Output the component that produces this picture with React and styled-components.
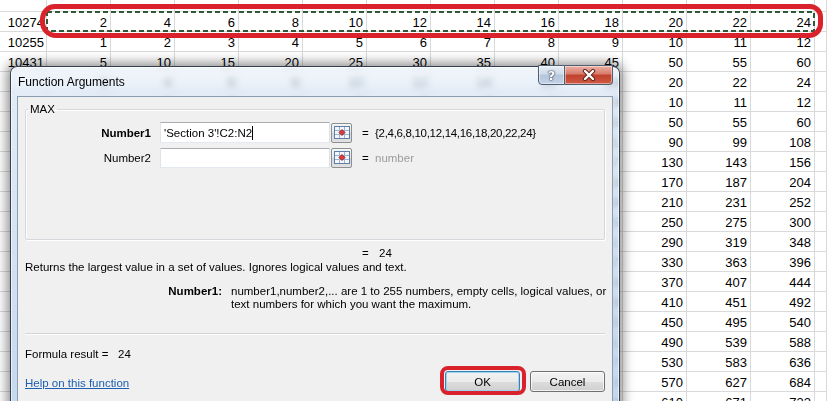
import React from 'react'
import styled, { createGlobalStyle } from 'styled-components'

const GlobalStyle = createGlobalStyle`
  html, body { margin: 0; padding: 0; background: #fff; overflow: hidden; }
`

// multiplier for each sheet row, value in column c is k * c
const rowFactors = [2, 1, 5, 2, 1, 5, 9, 13, 17, 21, 25, 29, 33, 37, 41, 45, 49, 53, 57, 61]
const rowLabels = ['10274', '10255', '10431']

const Page = styled.div`
  position: relative;
  width: 827px;
  height: 401px;
  overflow: hidden;
  font-family: "Liberation Sans", Arial, sans-serif;
`

const Sheet = styled.div`
  display: grid;
  grid-template-columns: 47px repeat(12, 64px) 1fr;
  grid-auto-rows: 20px;
  margin-top: -8px;
  font-size: 13px;
  color: #000;
`

const Cell = styled.div`
  box-sizing: border-box;
  border-right: 1px solid #d9d9d9;
  border-bottom: 1px solid #d9d9d9;
  text-align: right;
  padding: 1px ${p => (p.$label ? 2 : 3)}px 0 0;
  line-height: 19px;
  white-space: nowrap;
`

const Marquee = styled.svg`
  position: absolute;
  left: 46px;
  top: 11px;
`

const RedMark = styled.div`
  position: absolute;
  left: 40px;
  top: 4px;
  width: 783px;
  height: 34px;
  box-sizing: border-box;
  border: 5px solid #d9222b;
  border-radius: 15px 13px 14px 16px;
`

const Dialog = styled.div`
  position: absolute;
  left: 10px;
  top: 66px;
  width: 610px;
  height: 360px;
  box-sizing: border-box;
  border: 1px solid rgba(25, 35, 50, 0.85);
  border-radius: 7px 7px 0 0;
  padding: 0 6px;
  background: linear-gradient(to bottom, rgba(236, 243, 250, 0.66) 0, rgba(214, 228, 244, 0.72) 30px, rgba(186, 208, 234, 0.85) 100%);
  backdrop-filter: blur(3px);
  box-shadow: 0 0 12px 3px rgba(0, 0, 0, 0.45), inset 0 0 0 1px rgba(255, 255, 255, 0.6);
`

const TitleBar = styled.div`
  display: flex;
  align-items: flex-start;
  height: 29px;
`

const Title = styled.div`
  flex: 1;
  font-size: 12px;
  line-height: 14px;
  padding: 8px 0 0 1px;
  color: #000;
`

const CaptionButton = styled.div`
  width: ${p => p.$w}px;
  height: 20px;
  margin-top: -2px;
  box-sizing: border-box;
  display: flex;
  align-items: center;
  justify-content: center;
  border: 1px solid #4e5d70;
  border-left-width: ${p => (p.$close ? 0 : 1)}px;
  border-radius: ${p => (p.$close ? '0 0 4px 0' : '0 0 0 4px')};
  background: ${p => p.$close
    ? 'linear-gradient(#eab1a6 0, #d87a69 45%, #c1412d 50%, #cf5a43 100%)'
    : 'linear-gradient(#e6edf6 0, #cfdbe9 45%, #b4c6dc 50%, #c3d3e6 100%)'};
  box-shadow: inset 0 0 0 1px rgba(255, 255, 255, 0.45);
`

const HelpGlyph = styled.span`
  font-family: "DejaVu Sans", sans-serif;
  font-weight: bold;
  font-size: 13px;
  color: #fff;
  text-shadow: 0 0 1px #3a4656, 0 0 1px #3a4656, 0 0 2px #3a4656;
`

const Client = styled.div`
  box-sizing: border-box;
  height: 331px;
  border: 1px solid #8a9cb2;
  background: #f0f0f0;
  padding: 5px 7px 0 7px;
  font-size: 11.5px;
  color: #000;
`

const Group = styled.fieldset`
  margin: 0;
  box-sizing: border-box;
  height: 138px;
  padding: 6px 0 0 0;
  border: 1px solid #d5d9de;
  box-shadow: 1px 1px 0 #fff, inset 1px 1px 0 #fff;
  border-radius: 2px;
  display: flex;
  flex-direction: column;
  gap: 4px;
`

const Legend = styled.legend`
  margin-left: 2px;
  padding: 0 2px;
  line-height: 14px;
`

const ArgRow = styled.div`
  display: flex;
  align-items: center;
  height: 21px;
`

const ArgLabel = styled.div`
  width: 125px;
  text-align: right;
  font-weight: ${p => (p.$bold ? 'bold' : 'normal')};
`

const Field = styled.div`
  box-sizing: border-box;
  width: 170px;
  height: ${p => p.$h}px;
  margin-left: 9px;
  background: #fff;
  border: 1px solid #abadb3;
  border-left-color: #e2e3ea;
  border-right-color: #dbdfe6;
  border-bottom-color: #e3e9ef;
  padding: 0 3px;
  display: flex;
  align-items: center;
  white-space: nowrap;
  font-size: 11.5px;
`

const Caret = styled.span`
  display: inline-block;
  width: 1px;
  height: 14px;
  background: #000;
`

const RangeButton = styled.div`
  box-sizing: border-box;
  width: 21px;
  height: 20px;
  margin-left: 1px;
  border: 1px solid #8e8f8f;
  border-radius: 2px;
  background: linear-gradient(#f6f6f6 0, #e6e6e6 50%, #d6d6d6 51%, #e2e2e2 100%);
  display: flex;
  align-items: center;
  justify-content: center;
`

const Equals = styled.span`
  margin-left: ${p => p.$ml}px;
  width: 7px;
`

const ArgValue = styled.span`
  margin-left: ${p => p.$ml}px;
  white-space: nowrap;
  letter-spacing: ${p => (p.$tight ? '-0.3px' : '0')};
  color: ${p => (p.$muted ? '#9c9c9c' : '#000')};
`

const ResultLine = styled.div`
  display: flex;
  height: 14px;
  line-height: 14px;
  margin-top: 6px;
`

const TextLine = styled.div`
  line-height: 14px;
  white-space: nowrap;
`

const ArgHelp = styled.div`
  display: grid;
  grid-template-columns: 197px 1fr;
  column-gap: 9px;
  margin-top: 11px;
  line-height: 13px;
  white-space: nowrap;
`

const ArgHelpName = styled.div`
  text-align: right;
  font-weight: bold;
`

const Separator = styled.div`
  height: 1px;
  margin-top: 22px;
  background: #d5d5d5;
  box-shadow: 0 1px 0 #fff;
`

const FormulaResult = styled.div`
  margin-top: 13px;
  line-height: 14px;
  white-space: pre;
`

const Footer = styled.div`
  display: flex;
  align-items: center;
  margin-top: 10px;
`

const HelpLink = styled.a`
  flex: 1;
  padding-top: 2px;
  color: #1d5fb0;
  text-decoration: underline;
  cursor: pointer;
`

const Highlight = styled.span`
  position: relative;
  display: inline-flex;
  &::after {
    content: '';
    position: absolute;
    left: -5px;
    right: -6px;
    top: -5px;
    bottom: -3px;
    border: 4px solid #d9222b;
    border-radius: 8px;
  }
`

const Button = styled.button`
  box-sizing: border-box;
  width: 75px;
  height: 21px;
  margin-left: ${p => p.$ml || 0}px;
  padding: 0;
  font-family: "Liberation Sans", Arial, sans-serif;
  font-size: 11.5px;
  color: #000;
  border: 1px solid ${p => (p.$default ? '#3c7fb1' : '#707070')};
  border-radius: 3px;
  background: linear-gradient(#f2f2f2 0, #ebebeb 50%, #dddddd 51%, #cfcfcf 100%);
  box-shadow: inset 0 0 0 1px ${p => (p.$default ? '#9fd3f2' : 'rgba(255,255,255,0.7)')};
`

function RangeIcon() {
  return (
    <svg width="16" height="13" viewBox="0 0 16 13">
      <rect x="0.5" y="0.5" width="15" height="12" fill="#f3f7fc" stroke="#5d7fa7" />
      <path d="M1 4.5h14M1 8.5h14M5.5 1v11M10.5 1v11" stroke="#9db4d0" strokeWidth="1" />
      <path d="M8 3.5l3 3-3 3-3-3z" fill="#e03a3a" stroke="#8e1b1b" strokeWidth="0.8" />
    </svg>
  )
}

function CloseIcon() {
  return (
    <svg width="14" height="12" viewBox="0 0 14 12">
      <path d="M3 2l8 8M11 2l-8 8" stroke="#5b2119" strokeWidth="4.2" strokeLinecap="round" />
      <path d="M3 2l8 8M11 2l-8 8" stroke="#fff" strokeWidth="2.4" strokeLinecap="round" />
    </svg>
  )
}

function SpreadSheet() {
  const rows = [null, ...rowFactors]
  return (
    <Sheet>
      {rows.map((k, r) => (
        <React.Fragment key={r}>
          <Cell $label>{r >= 1 && r <= 3 ? rowLabels[r - 1] : ''}</Cell>
          {Array.from({ length: 12 }, (_, i) => (
            <Cell key={i}>{k ? k * (i + 1) : ''}</Cell>
          ))}
          <Cell />
        </React.Fragment>
      ))}
    </Sheet>
  )
}

export default function App() {
  return (
    <Page>
      <GlobalStyle />
      <SpreadSheet />
      <Marquee width="769" height="21">
        <rect x="1" y="1" width="767" height="19" fill="none" stroke="#2f5a3a" strokeWidth="2" strokeDasharray="5 3" />
      </Marquee>
      <RedMark />

      <Dialog>
        <TitleBar>
          <Title>Function Arguments</Title>
          <CaptionButton $w={27}><HelpGlyph>?</HelpGlyph></CaptionButton>
          <CaptionButton $w={48} $close><CloseIcon /></CaptionButton>
        </TitleBar>
        <Client>
          <Group>
            <Legend>MAX</Legend>
            <ArgRow>
              <ArgLabel $bold>Number1</ArgLabel>
              <Field $h={21}>'Section 3'!C2:N2<Caret /></Field>
              <RangeButton><RangeIcon /></RangeButton>
              <Equals $ml={10}>=</Equals>
              <ArgValue $ml={6} $tight>{'{2,4,6,8,10,12,14,16,18,20,22,24}'}</ArgValue>
            </ArgRow>
            <ArgRow>
              <ArgLabel>Number2</ArgLabel>
              <Field $h={20} />
              <RangeButton><RangeIcon /></RangeButton>
              <Equals $ml={10}>=</Equals>
              <ArgValue $ml={6} $muted>number</ArgValue>
            </ArgRow>
          </Group>

          <ResultLine>
            <Equals $ml={337}>=</Equals>
            <ArgValue $ml={10}>24</ArgValue>
          </ResultLine>
          <TextLine>Returns the largest value in a set of values. Ignores logical values and text.</TextLine>

          <ArgHelp>
            <ArgHelpName>Number1:</ArgHelpName>
            <div>
              number1,number2,... are 1 to 255 numbers, empty cells, logical values, or<br />
              text numbers for which you want the maximum.
            </div>
          </ArgHelp>

          <Separator />
          <FormulaResult>{'Formula result =   24'}</FormulaResult>

          <Footer>
            <HelpLink>Help on this function</HelpLink>
            <Highlight><Button $default>OK</Button></Highlight>
            <Button $ml={10}>Cancel</Button>
          </Footer>
        </Client>
      </Dialog>
    </Page>
  )
}
